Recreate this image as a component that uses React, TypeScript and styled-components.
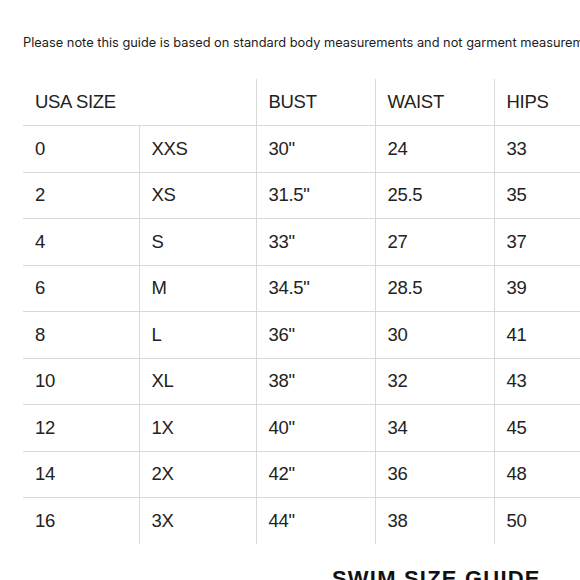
import React from "react";
import styled, { createGlobalStyle } from "styled-components";

const GlobalStyle = createGlobalStyle`
  html, body {
    margin: 0;
    padding: 0;
    background: #fff;
  }
  body {
    width: 580px;
    height: 580px;
    overflow: hidden;
  }
`;

type Row = [string, string, string, string, string];

const rows: Row[] = [
  ["0", "XXS", '30"', "24", "33"],
  ["2", "XS", '31.5"', "25.5", "35"],
  ["4", "S", '33"', "27", "37"],
  ["6", "M", '34.5"', "28.5", "39"],
  ["8", "L", '36"', "30", "41"],
  ["10", "XL", '38"', "32", "43"],
  ["12", "1X", '40"', "34", "45"],
  ["14", "2X", '42"', "36", "48"],
  ["16", "3X", '44"', "38", "50"],
];

const colWidths = [116, 117, 119, 119, 119];

const App = () => {
  return (
    <Page>
      <GlobalStyle />
      <Note>
        Please note this guide is based on standard body measurements and not
        garment measurements.
      </Note>
      <SizeTable>
        <colgroup>
          {colWidths.map((w, i) => (
            <col key={i} width={w} />
          ))}
        </colgroup>
        <thead>
          <tr>
            <HeadCell colSpan={2}>USA SIZE</HeadCell>
            <HeadCell>BUST</HeadCell>
            <HeadCell>WAIST</HeadCell>
            <HeadCell>HIPS</HeadCell>
          </tr>
        </thead>
        <tbody>
          {rows.map((row, i) => (
            <BodyRow key={i} $last={i === rows.length - 1}>
              {row.map((cell, j) => (
                <Cell key={j}>{cell}</Cell>
              ))}
            </BodyRow>
          ))}
        </tbody>
      </SizeTable>
      <GuideTitle>SWIM SIZE GUIDE</GuideTitle>
    </Page>
  );
};

const Page = styled.div`
  padding: 35px 0 0 23px;
  width: 900px;
`;

const Note = styled.p`
  margin: 0;
  font-family: Inter, "Open Sans", sans-serif;
  font-size: 12.8px;
  line-height: 16px;
  color: #1c1c1c;
  white-space: nowrap;
`;

const SizeTable = styled.table`
  margin-top: 28px;
  border-collapse: collapse;
  table-layout: fixed;
  width: 590px;
  font-family: "Liberation Sans", Arial, sans-serif;
  color: #222;
`;

const HeadCell = styled.th`
  height: 46px;
  padding: 0 0 0 12px;
  text-align: left;
  font-weight: 400;
  font-size: 18.5px;
  letter-spacing: -0.3px;
  vertical-align: middle;
  border-bottom: 1px solid #d9d9d9;

  & + & {
    border-left: 1px solid #d9d9d9;
  }
`;

const BodyRow = styled.tr<{ $last: boolean }>`
  height: 46.5px;

  td {
    border-bottom: ${(p) => (p.$last ? "none" : "1px solid #d9d9d9")};
  }
`;

const Cell = styled.td`
  padding: 0 0 0 12px;
  font-size: 18.5px;
  letter-spacing: -0.3px;
  vertical-align: middle;

  & + & {
    border-left: 1px solid #d9d9d9;
  }
`;

const GuideTitle = styled.h2`
  margin: 22px 0 0 309px;
  font-family: "Liberation Sans", Arial, sans-serif;
  font-weight: 700;
  font-size: 22px;
  letter-spacing: 1.2px;
  color: #111;
`;

export default App;
